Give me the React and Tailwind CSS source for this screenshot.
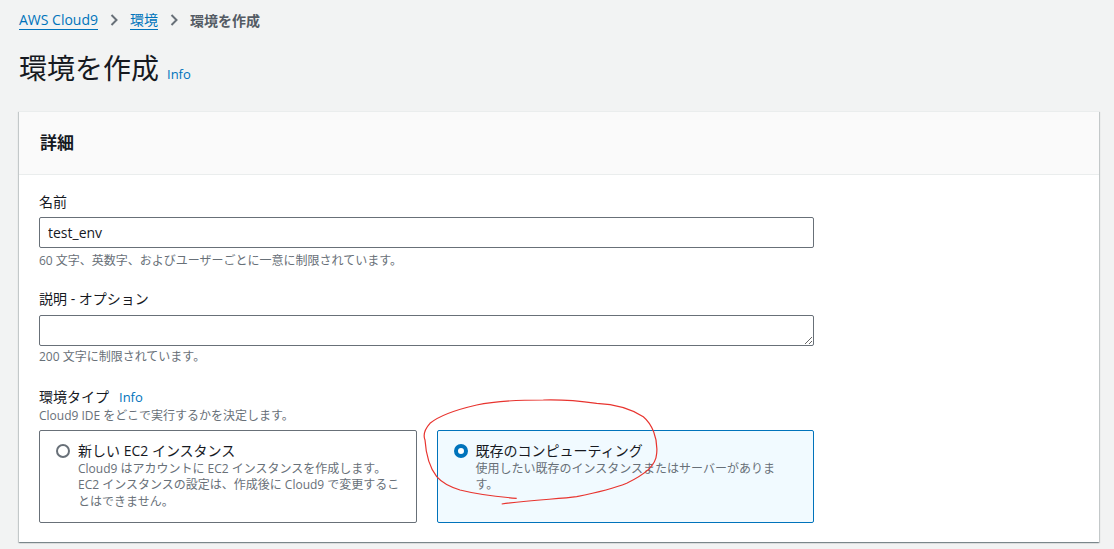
import React from "react";

const font = { fontFamily: '"Open Sans", "Noto Sans CJK JP", sans-serif' };

function Chevron() {
  return (
    <svg width="8" height="12" viewBox="0 0 8 12" className="mx-[12px]">
      <path d="M1.5 1 L6.5 6 L1.5 11" fill="none" stroke="#687078" strokeWidth="2" />
    </svg>
  );
}

function Radio({ checked }) {
  return checked ? (
    <span className="mt-[3px] block w-[14px] h-[14px] shrink-0 rounded-full border-[4px] border-[#0073bb] bg-white" />
  ) : (
    <span className="mt-[3px] block w-[14px] h-[14px] shrink-0 rounded-full border-[2px] border-[#687078] bg-white" />
  );
}

function Tile({ checked, title, desc }) {
  return (
    <div
      className={
        "flex gap-2 pl-[16px] pr-[14px] pt-[10px] pb-3 rounded-[2px] border " +
        (checked ? "border-[#0073bb] bg-[#f1faff]" : "border-[#687078] bg-white")
      }
    >
      <Radio checked={checked} />
      <div className={checked ? "max-w-[304px]" : ""}>
        <div className="text-[14px] leading-[20px] text-[#16191f]">{title}</div>
        <div className="text-[12px] leading-[16.5px] text-[#687078]">{desc}</div>
      </div>
    </div>
  );
}

export default function App() {
  return (
    <div className="min-h-[549px] bg-[#f2f3f3] pl-[19px] pr-[15px] pt-[10px]" style={font}>
      <nav className="flex items-center h-[20px] text-[14px]">
        <a className="text-[#0073bb] border-b border-[#0073bb] leading-[18px]">AWS Cloud9</a>
        <Chevron />
        <a className="text-[#0073bb] border-b border-[#0073bb] leading-[18px]">環境</a>
        <Chevron />
        <span className="font-bold text-[#545b64]">環境を作成</span>
      </nav>

      <div className="flex items-baseline gap-[8px] mt-[18px]">
        <h1 className="text-[28px] leading-[40px] text-[#16191f]">環境を作成</h1>
        <span className="text-[13px] text-[#0073bb]">Info</span>
      </div>

      <section className="mt-[23px] bg-white border-t border-[#eaeded] shadow-[0_1px_1px_0_rgba(0,28,36,0.3),1px_1px_1px_0_rgba(0,28,36,0.15),-1px_1px_1px_0_rgba(0,28,36,0.15)]">
        <div className="h-[63px] flex items-center px-[21px] bg-[#fafafa] border-b border-[#eaeded]">
          <h2 className="text-[17px] font-bold text-[#16191f]">詳細</h2>
        </div>

        <div className="px-[20px] pt-[17px] pb-[21px]">
          <div className="w-[775px]">
            <label className="block text-[14px] leading-[20px] text-[#16191f]">名前</label>
            <input
              className="mt-[5px] block w-full h-[31px] px-[8px] text-[14px] text-[#16191f] border border-[#687078] rounded-[2px] outline-none"
              defaultValue="test_env"
            />
            <p className="mt-[5px] text-[12px] leading-[16px] text-[#687078]">
              60 文字、英数字、およびユーザーごとに一意に制限されています。
            </p>

            <label className="mt-[20px] block text-[14px] leading-[20px] text-[#16191f]">説明 - オプション</label>
            <textarea
              rows={1}
              className="mt-[6px] block w-full h-[31px] px-[8px] text-[14px] border border-[#687078] rounded-[2px] outline-none"
            />
            <p className="mt-[3px] text-[12px] leading-[16px] text-[#687078]">200 文字に制限されています。</p>

            <div className="mt-[22px] flex items-baseline gap-[10px]">
              <label className="text-[14px] leading-[20px] text-[#16191f]">環境タイプ</label>
              <span className="text-[13px] text-[#0073bb]">Info</span>
            </div>
            <p className="text-[12px] leading-[16px] text-[#687078]">Cloud9 IDE をどこで実行するかを決定します。</p>

            <div className="relative mt-[6px] grid grid-cols-2 gap-[20px] h-[91px]">
              <Tile
                title="新しい EC2 インスタンス"
                desc="Cloud9 はアカウントに EC2 インスタンスを作成します。 EC2 インスタンスの設定は、作成後に Cloud9 で変更することはできません。"
              />
              <Tile checked title="既存のコンピューティング" desc="使用したい既存のインスタンスまたはサーバーがあります。" />

              <svg
                className="absolute left-[366px] top-[-32px] pointer-events-none"
                width="265"
                height="112"
                viewBox="405 398 265 112"
              >
                <path
                  d="M501.7 504 C530 500 560 499 576.7 496.7 C600 492 615 488 626.7 483.3 C645 474 656 466 656.7 453.3 C658 438 652 424 643.3 416.7 C630 408 612 404 596.7 403.3 C580 401 560 399.5 543.3 400 C520 400 495 401 476.7 405 C455 410 440 415 430 423.3 C424 430 423 435 425 440 C426 455 430 468 436.7 476.7 C443 484 450 487 460 490 C480 495 500 497 516.7 498.3"
                  fill="none"
                  stroke="#e8342f"
                  strokeWidth="1.2"
                />
              </svg>
            </div>
          </div>
        </div>
      </section>
    </div>
  );
}
